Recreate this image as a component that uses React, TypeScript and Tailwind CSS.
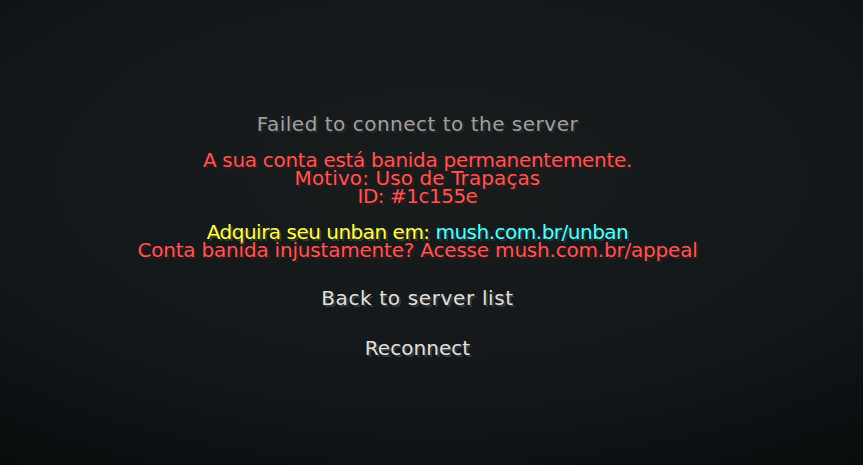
import React from "react";

const red = "text-[#ff5555] [text-shadow:2px_2px_0_#3f1515]";

export default function App() {
  return (
    <div className="flex h-[465px] w-full flex-col items-center overflow-hidden bg-[radial-gradient(ellipse_95%_85%_at_50%_38%,#181c1d_0%,#131719_55%,#07090a_100%)] pt-[115px] pr-[28px] font-['DejaVu_Sans',sans-serif] text-[20px] leading-[18px] whitespace-pre">
      <p className="h-[18px] tracking-[0.5px] text-[#a0a0a0] [text-shadow:2px_2px_0_#282828]">Failed to connect to the server</p>
      <div className="mt-[18px] flex flex-col items-center">
        <p className={`h-[18px] tracking-[-0.3px] ${red}`}>A sua conta está banida permanentemente.</p>
        <p className={`h-[18px] tracking-[0.1px] ${red}`}>Motivo: Uso de Trapaças</p>
        <p className={`h-[18px] tracking-[-0.5px] ${red}`}>ID: #1c155e</p>
        <p className="h-[18px]"> </p>
        <p className="h-[18px] tracking-[-0.5px]">
          <span className="text-[#ffff55] [text-shadow:2px_2px_0_#3f3f15]">Adquira seu unban em: </span>
          <span className="text-[#55ffff] [text-shadow:2px_2px_0_#153f3f]">mush.com.br/unban</span>
        </p>
        <p className={`h-[18px] tracking-[-0.2px] ${red}`}>Conta banida injustamente? Acesse mush.com.br/appeal</p>
      </div>
      <button className="mt-[30px] h-[18px] tracking-[0.65px] text-[#e0e0e0] [text-shadow:2px_2px_0_#383838]">Back to server list</button>
      <button className="mt-[32px] h-[18px] tracking-[0.05px] text-[#e0e0e0] [text-shadow:2px_2px_0_#383838]">Reconnect</button>
    </div>
  );
}
